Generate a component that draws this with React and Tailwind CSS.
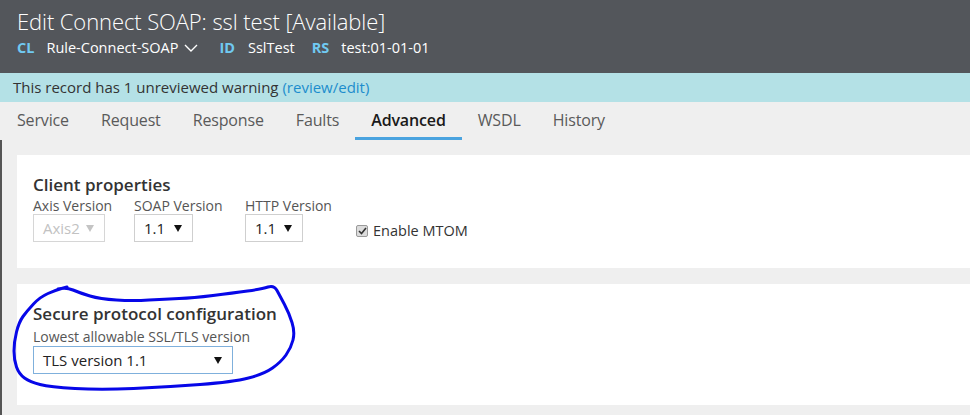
import React from "react"

const tabs = ["Service", "Request", "Response", "Faults", "Advanced", "WSDL", "History"]

const loop = [
  [58, 289], [66, 287], [80, 293], [100, 299], [133, 301], [165, 299], [193, 298], [233, 293],
  [262, 289], [274, 285], [280, 296], [289, 313], [295, 332], [291, 348], [281, 362], [264, 374],
  [233, 382], [167, 387], [100, 390], [50, 387], [30, 382], [19, 374], [14, 360], [14, 342],
  [19, 322], [27, 311], [40, 297], [56, 290], [67, 287],
]

// smooth the hand-drawn loop through midpoints
function loopPath(pts) {
  const mid = (a, b) => [(a[0] + b[0]) / 2, (a[1] + b[1]) / 2]
  let d = `M${pts[0][0]} ${pts[0][1]}`
  for (let i = 1; i < pts.length - 1; i++) {
    const m = mid(pts[i], pts[i + 1])
    d += ` Q${pts[i][0]} ${pts[i][1]} ${m[0]} ${m[1]}`
  }
  const last = pts[pts.length - 1]
  d += ` L${last[0]} ${last[1]}`
  return d
}

function Arrow({ color }) {
  return (
    <svg width="8" height="8" viewBox="0 0 8 8">
      <polygon points="0,1 8,1 4,8" fill={color} />
    </svg>
  )
}

function Select({ width, text, disabled, focus }) {
  return (
    <div
      className={`flex items-center justify-between h-[28px] pl-[9px] pr-[10px] border text-[15px] ${
        disabled ? "border-[#d6d6d6] text-[#c2c2c2]" : focus ? "border-[#7fb0dc] text-[#222]" : "border-[#cfcfcf] text-[#222]"
      }`}
      style={{ width }}
    >
      <span className="leading-none">{text}</span>
      <Arrow color={disabled ? "#c4c4c4" : "#111"} />
    </div>
  )
}

function Field({ label, width, children }) {
  return (
    <div className="flex flex-col" style={{ width }}>
      <div className="text-[14px] leading-[16px] pt-[2px] text-[#555] whitespace-nowrap">{label}</div>
      {children}
    </div>
  )
}

export default function App() {
  return (
    <div className="relative w-[970px] h-[415px] overflow-hidden bg-[#efefef] font-['Open_Sans',sans-serif]">
      <div className="h-[73px] bg-[#53565b] pl-[17px] pt-[6px]">
        <div className="text-[22px] leading-[30px] text-white font-light tracking-[-0.1px]">
          Edit Connect SOAP: ssl test [Available]
        </div>
        <div className="flex items-center mt-[2px] text-[14.5px] leading-[20px] text-white">
          <span className="font-bold text-[#70c9f1]">CL</span>
          <span className="ml-[12px]">Rule-Connect-SOAP</span>
          <svg className="ml-[6px]" width="14" height="8" viewBox="0 0 14 8">
            <path d="M1 1 L7 7 L13 1" fill="none" stroke="#fff" strokeWidth="1.4" />
          </svg>
          <span className="ml-[21px] font-bold text-[#70c9f1]">ID</span>
          <span className="ml-[13px]">SslTest</span>
          <span className="ml-[17px] font-bold text-[#70c9f1]">RS</span>
          <span className="ml-[12px]">test:01-01-01</span>
        </div>
      </div>

      <div className="h-[29px] bg-[#b4e1e6] pl-[13px] flex items-center text-[15px] text-[#333]">
        This record has 1 unreviewed warning&nbsp;<span className="text-[#1d8dcd]">(review/edit)</span>
      </div>

      <div className="h-[38px] flex pl-[1px]">
        {tabs.map((t) => (
          <div
            key={t}
            className={`px-[16px] pt-[7px] text-[16px] leading-[22px] tracking-[-0.15px] ${
              t === "Advanced" ? "font-semibold text-[#1a1a1a] border-b-[3px] border-[#4aa3df]" : "text-[#5a5a5a]"
            }`}
          >
            {t}
          </div>
        ))}
      </div>

      <div className="h-[275px] border-l-2 border-[#555] pl-[15px] pt-[15px] flex flex-col gap-[16px]">
        <div className="h-[113px] bg-white pl-[16px] pt-[19px]">
          <div className="text-[17px] leading-[22px] font-semibold text-[#333]">Client properties</div>
          <div className="flex items-start">
            <Field label="Axis Version" width={101}>
              <Select width={72} text="Axis2" disabled />
            </Field>
            <Field label="SOAP Version" width={111}>
              <Select width={59} text="1.1" />
            </Field>
            <Field label="HTTP Version" width={111}>
              <Select width={58} text="1.1" />
            </Field>
            <div className="flex items-center mt-[24px] gap-[5px]">
              <span className="w-[12px] h-[12px] rounded-[2px] border border-[#9a9a9a] bg-[#dcdcdc] flex items-center justify-center">
                <svg width="9" height="8" viewBox="0 0 9 8">
                  <path d="M1 4 L3.5 6.5 L8 1" fill="none" stroke="#333" strokeWidth="1.6" />
                </svg>
              </span>
              <span className="text-[14.5px] text-[#333]">Enable MTOM</span>
            </div>
          </div>
        </div>

        <div className="h-[121px] bg-white pl-[16px] pt-[19px]">
          <div className="text-[17px] leading-[22px] font-semibold text-[#333]">Secure protocol configuration</div>
          <div className="mt-[3px] text-[14px] leading-[18px] text-[#555]">Lowest allowable SSL/TLS version</div>
          <Select width={200} text="TLS version 1.1" focus />
        </div>
      </div>

      <svg className="absolute left-0 top-0 pointer-events-none" width="970" height="415">
        <path d={loopPath(loop)} fill="none" stroke="#0707e8" strokeWidth="3" strokeLinecap="round" strokeLinejoin="round" />
      </svg>
    </div>
  )
}
